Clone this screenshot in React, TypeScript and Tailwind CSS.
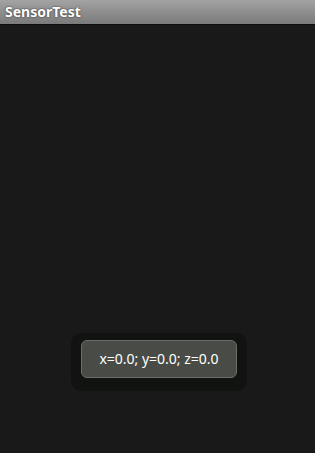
export default function App() {
  return (
    <div className="w-[315px] h-[453px] bg-[#191919] flex flex-col" style={{ fontFamily: '"Noto Sans", "Open Sans", sans-serif' }}>
      <div className="h-[24px] shrink-0 bg-gradient-to-b from-[#a3a3a3] to-[#7a7a7a] flex items-center pl-[5px]">
        <span className="text-white font-bold text-[14px] leading-none [text-shadow:0_0_2px_rgba(0,0,0,0.8)]">SensorTest</span>
      </div>
      <div className="h-[1px] bg-[#0e0e0e] shrink-0" />
      <div className="flex-1 flex flex-col items-center justify-end pb-[62px]">
        <div className="w-[176px] h-[58px] rounded-[10px] bg-[#111311] flex items-start justify-center pt-[7px] ml-[3px]">
          <div className="w-[156px] h-[38px] rounded-[6px] bg-[#494b47] border border-[#6b6d69] flex items-center justify-center">
            <span className="text-white text-[14px] leading-none">x=0.0; y=0.0; z=0.0</span>
          </div>
        </div>
      </div>
    </div>
  );
}
